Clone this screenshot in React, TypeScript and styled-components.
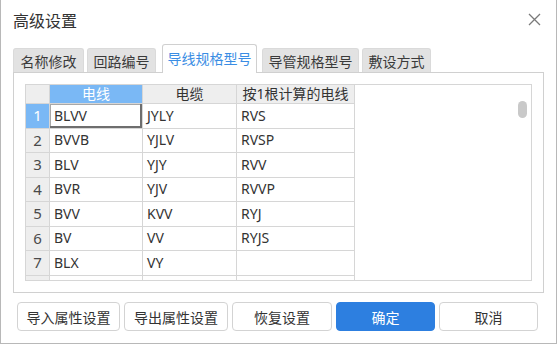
import { Fragment } from "react";
import styled, { createGlobalStyle } from "styled-components";

const GlobalStyle = createGlobalStyle`
  body {
    margin: 0;
    background: #ffffff;
    font-family: "Noto Sans CJK SC", "Noto Sans", sans-serif;
    color: #333333;
  }
  * {
    box-sizing: border-box;
  }
`;

const StyledWindow = styled.div`
  display: flex;
  flex-direction: column;
  width: 557px;
  height: 344px;
  background: #ffffff;
  border: 1px solid #b8b8b8;
  border-top: none;
`;

const StyledTitleBar = styled.div`
  display: flex;
  align-items: center;
  justify-content: space-between;
  height: 39px;
  padding: 0 15px 0 12px;
`;

const StyledTitle = styled.div`
  font-size: 16px;
  line-height: 1;
  color: #333333;
`;

const StyledClose = styled.button`
  display: flex;
  padding: 0;
  border: none;
  background: none;
  cursor: pointer;
`;

const StyledTabRow = styled.div`
  display: flex;
  align-items: flex-end;
  height: 29px;
  margin: 5px 0 -1px;
  padding-left: 12px;
  position: relative;
  z-index: 1;
`;

const StyledTab = styled.div<{ $active?: boolean; $width: number; $gap: number }>`
  display: flex;
  align-items: center;
  justify-content: center;
  width: ${(p) => p.$width}px;
  height: ${(p) => (p.$active ? 29 : 24)}px;
  margin-right: ${(p) => p.$gap}px;
  margin-bottom: ${(p) => (p.$active ? 0 : 1)}px;
  padding-bottom: ${(p) => (p.$active ? 2 : 0)}px;
  font-size: 14px;
  line-height: 1;
  color: ${(p) => (p.$active ? "#3a8de4" : "#3a3a3a")};
  background: ${(p) => (p.$active ? "#ffffff" : "#e2e2e2")};
  border: 1px solid ${(p) => (p.$active ? "#d0d0d0" : "#dadada")};
  border-bottom: none;
  border-radius: 3px 3px 0 0;
`;

const StyledPanel = styled.div`
  display: flex;
  height: 221px;
  margin: 0 12px;
  padding: 11px;
  border: 1px solid #d0d0d0;
`;

const StyledGridFrame = styled.div`
  position: relative;
  display: flex;
  flex: 1;
  overflow: hidden;
  border: 1px solid #d6d6d6;
  background: #ffffff;
`;

const StyledTable = styled.div`
  display: grid;
  grid-template-columns: 24px 93px 94px 118px;
  grid-template-rows: 19px repeat(8, 24.5px);
  align-content: start;
`;

type CellKind = "corner" | "head" | "headActive" | "rowHead" | "rowHeadActive" | "data" | "selected";

const cellBg: Record<CellKind, string> = {
  corner: "#eeeeee",
  head: "#eeeeee",
  headActive: "#7ab8f5",
  rowHead: "#eeeeee",
  rowHeadActive: "#7ab8f5",
  data: "#ffffff",
  selected: "#ffffff",
};

const isData = (k: CellKind) => k === "data" || k === "selected";

const StyledCell = styled.div<{ $kind: CellKind }>`
  display: flex;
  align-items: center;
  justify-content: ${(p) => (isData(p.$kind) ? "flex-start" : "center")};
  padding-left: ${(p) => (isData(p.$kind) ? 4 : 0)}px;
  font-family: "Noto Sans", "Noto Sans CJK SC", sans-serif;
  font-size: ${(p) => (p.$kind === "rowHead" || p.$kind === "rowHeadActive" ? 15 : 14)}px;
  line-height: 1;
  white-space: nowrap;
  overflow: hidden;
  color: ${(p) =>
    p.$kind === "headActive" || p.$kind === "rowHeadActive" ? "#ffffff" : p.$kind === "rowHead" ? "#4a4a4a" : "#333333"};
  background: ${(p) => cellBg[p.$kind]};
  border-right: 1px solid #d6d6d6;
  border-bottom: 1px solid #d6d6d6;
  box-shadow: ${(p) => (p.$kind === "selected" ? "inset -2px -2px 0 #6e6e6e, inset 1px 1px 0 #a8a8a8" : "none")};
`;

const StyledThumb = styled.div`
  position: absolute;
  top: 16px;
  right: 4px;
  width: 9px;
  height: 17px;
  border-radius: 5px;
  background: #c9c9c9;
`;

const StyledButtonRow = styled.div`
  display: flex;
  gap: 4px;
  margin-top: 9px;
  padding-left: 16px;
`;

const StyledButton = styled.button<{ $primary?: boolean; $width: number }>`
  width: ${(p) => p.$width}px;
  height: 29px;
  padding: 0;
  font-family: "Noto Sans CJK SC", "Noto Sans", sans-serif;
  font-size: 14px;
  line-height: 1;
  color: ${(p) => (p.$primary ? "#ffffff" : "#333333")};
  background: ${(p) => (p.$primary ? "#2d7fe0" : "#ffffff")};
  border: 1px solid ${(p) => (p.$primary ? "#2d7fe0" : "#d3d3d3")};
  border-radius: 4px;
  cursor: pointer;
`;

const tabs = [
  { label: "名称修改", width: 71, gap: 3 },
  { label: "回路编号", width: 69, gap: 6 },
  { label: "导线规格型号", width: 95, gap: 5, active: true },
  { label: "导管规格型号", width: 97, gap: 3 },
  { label: "敷设方式", width: 69, gap: 0 },
];

const headers = ["电线", "电缆", "按1根计算的电线"];

const rows = [
  ["BLVV", "JYLY", "RVS"],
  ["BVVB", "YJLV", "RVSP"],
  ["BLV", "YJY", "RVV"],
  ["BVR", "YJV", "RVVP"],
  ["BVV", "KVV", "RYJ"],
  ["BV", "VV", "RYJS"],
  ["BLX", "VY", ""],
  ["", "", ""],
];

const buttons = [
  { label: "导入属性设置", width: 103 },
  { label: "导出属性设置", width: 104 },
  { label: "恢复设置", width: 100 },
  { label: "确定", width: 99, primary: true },
  { label: "取消", width: 99 },
];

function App() {
  return (
    <>
      <GlobalStyle />
      <StyledWindow>
        <StyledTitleBar>
          <StyledTitle>高级设置</StyledTitle>
          <StyledClose aria-label="关闭">
            <svg width="13" height="13" viewBox="0 0 13 13">
              <path d="M1 1 L12 12 M12 1 L1 12" stroke="#7a7a7a" strokeWidth="1.3" fill="none" />
            </svg>
          </StyledClose>
        </StyledTitleBar>

        <StyledTabRow>
          {tabs.map((t) => (
            <StyledTab key={t.label} $active={t.active} $width={t.width} $gap={t.gap}>
              {t.label}
            </StyledTab>
          ))}
        </StyledTabRow>

        <StyledPanel>
          <StyledGridFrame>
            <StyledTable>
              <StyledCell $kind="corner" />
              {headers.map((h, i) => (
                <StyledCell key={h} $kind={i === 0 ? "headActive" : "head"}>
                  {h}
                </StyledCell>
              ))}
              {rows.map((r, ri) => (
                <Fragment key={ri}>
                  <StyledCell $kind={ri === 0 ? "rowHeadActive" : "rowHead"}>{ri < 7 ? ri + 1 : ""}</StyledCell>
                  {r.map((v, ci) => (
                    <StyledCell key={ci} $kind={ri === 0 && ci === 0 ? "selected" : "data"}>
                      {v}
                    </StyledCell>
                  ))}
                </Fragment>
              ))}
            </StyledTable>
            <StyledThumb />
          </StyledGridFrame>
        </StyledPanel>

        <StyledButtonRow>
          {buttons.map((b) => (
            <StyledButton key={b.label} $primary={b.primary} $width={b.width}>
              {b.label}
            </StyledButton>
          ))}
        </StyledButtonRow>
      </StyledWindow>
    </>
  );
}

export default App;
